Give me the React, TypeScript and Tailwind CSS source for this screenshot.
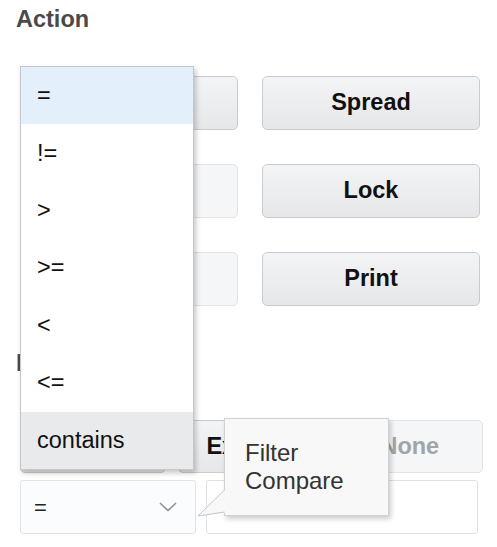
import React from 'react';

const font = "font-['Liberation_Sans',Arial,sans-serif]";

const operators = ['=', '!=', '>', '>=', '<', '<=', 'contains'];

function ActionButton({ label, disabled }: { label: string; disabled?: boolean }) {
  return (
    <button
      disabled={disabled}
      className={
        disabled
          ? 'h-[54px] rounded-[5px] border border-[#e1e4e7] bg-[#f5f6f8] text-[23.5px] font-bold text-[#a2a4a6]'
          : 'h-[54px] rounded-[5px] border border-[#c8ccd0] bg-linear-to-b from-[#f3f4f5] to-[#e6e7e9] text-[23.5px] font-bold text-[#111]'
      }
    >
      {label}
    </button>
  );
}

export default function App() {
  return (
    <div className={`${font} relative w-[497px] h-[547px] overflow-hidden bg-white`}>
      <div className="pt-[5px] pl-[16px]">
        <h2 className="text-[23.5px] leading-[28px] font-bold text-[#4a4a4a]">Action</h2>
      </div>

      <div className="mt-[43px] ml-[20px] w-[460px] grid grid-cols-2 gap-x-[24px] gap-y-[34px]">
        <ActionButton label="Filter" />
        <ActionButton label="Spread" />
        <ActionButton label="Drill" disabled />
        <ActionButton label="Lock" />
        <ActionButton label="Pivot" disabled />
        <ActionButton label="Print" />
      </div>

      <div className="mt-[43px] pl-[16px]">
        <h2 className="text-[23.5px] leading-[28px] font-bold text-[#4a4a4a]">Filter</h2>
      </div>

      <div className="mt-[43px] ml-[20px] w-[463px] grid grid-cols-3 gap-x-[12px]">
        <button className="h-[53px] rounded-[5px] border border-[#c8ccd0] bg-linear-to-b from-[#f3f4f5] to-[#e6e7e9] text-[23.5px] font-bold text-[#111]">
          All
        </button>
        <button className="h-[53px] rounded-[5px] border border-[#c8ccd0] bg-linear-to-b from-[#f3f4f5] to-[#e6e7e9] text-[23.5px] font-bold text-[#111]">
          Exclude
        </button>
        <button
          disabled
          className="h-[53px] rounded-[5px] border border-[#e1e4e7] bg-[#f5f6f8] text-[23.5px] font-bold text-[#a2a4a6]"
        >
          None
        </button>
      </div>

      <div className="mt-[7px] ml-[20px] flex gap-[10px]">
        <div className="w-[176px] h-[54px] rounded-[3px] border border-[#dfe2e5] bg-[#fbfcfd] flex items-center justify-between pl-[13px] pr-[18px]">
          <span className="text-[22px] text-[#222]">=</span>
          <svg width="18" height="10" viewBox="0 0 18 10" fill="none">
            <path d="M1 1l8 7.5L17 1" stroke="#8d9297" strokeWidth="1.6" />
          </svg>
        </div>
        <div className="w-[272px] h-[54px] rounded-[3px] border border-[#dfe2e5] bg-white flex items-center pl-[13px]">
          <span className="text-[22px] text-[#9a9a9a]">Value</span>
        </div>
      </div>

      {/* operator dropdown */}
      <div className="absolute left-[20px] top-[66px] w-[174px] h-[404px] flex flex-col border border-[#c3c8cd] bg-white shadow-[2px_3px_5px_rgba(0,0,0,0.22)]">
        {operators.map((op, i) => (
          <div
            key={op}
            className={`flex-1 flex items-center pl-[16px] text-[23.5px] text-[#111] ${
              i === 0 ? 'bg-[#e3f0fb]' : i === operators.length - 1 ? 'bg-[#e9eaec]' : ''
            }`}
          >
            {op}
          </div>
        ))}
      </div>

      {/* tooltip */}
      <div className="absolute left-[224px] top-[418px] w-[165px] h-[98px] border border-[#cfd2d5] bg-[#f8f8f9] shadow-[2px_3px_5px_rgba(0,0,0,0.2)] pt-[20px] pl-[20px] text-[24px] leading-[28px] text-[#333]">
        <div>Filter</div>
        <div>Compare</div>
      </div>
      <svg className="absolute left-[196px] top-[488px]" width="30" height="30" viewBox="0 0 30 30">
        <path d="M29 2L2 28L29 25Z" fill="#f8f8f9" />
        <path d="M28.5 2L2 28L28.5 24" fill="none" stroke="#c2c6ca" strokeWidth="1" />
      </svg>
    </div>
  );
}
